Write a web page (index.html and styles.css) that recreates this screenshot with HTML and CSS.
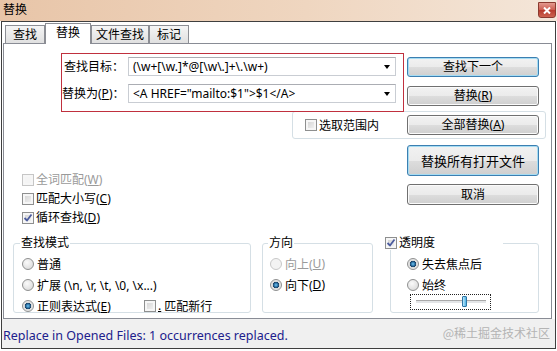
FILE: index.html
```html
<!DOCTYPE html>
<html lang="zh-CN">
<head>
  <meta charset="UTF-8" />
  <title>替换</title>
  <link rel="stylesheet" href="styles.css">
</head>
<body>
  <div class="window">
    <div class="titlebar">
      <span class="title">替换</span>
      <span class="close">
        <svg width="8" height="7" viewBox="0 0 8 7"><path d="M1 0.5 L7 6.5 M7 0.5 L1 6.5" stroke="#fff" stroke-width="2"/></svg>
      </span>
    </div>

    <div class="client">
      <!-- tabs -->
      <div class="tabs">
        <div class="tab">查找</div>
        <div class="tab active">替换</div>
        <div class="tab narrow">文件查找</div>
        <div class="tab">标记</div>
      </div>

      <div class="panel">
        <div class="search-row">
          <div class="fields">
            <label class="field-label">查找目标：</label>
            <div class="combo"><span>(\w+[\w.]*@[\w\.]+\.\w+)</span><i class="arrow"></i></div>
            <label class="field-label">替换为(<u>P</u>)：</label>
            <div class="combo"><span>&lt;A HREF="mailto:$1"&gt;$1&lt;/A&gt;</span><i class="arrow"></i></div>
          </div>
          <div class="btn-col">
            <button class="btn default">查找下一个</button>
            <button class="btn gap">替换(<u>R</u>)</button>
          </div>
        </div>

        <div class="range-box">
          <label class="check"><span class="cb"></span>选取范围内</label>
          <button class="btn">全部替换(<u>A</u>)</button>
        </div>

        <div class="options-row">
          <div class="checks">
            <div class="check disabled"><span class="cb"></span>全词匹配(<u>W</u>)</div>
            <div class="check"><span class="cb"></span>匹配大小写(<u>C</u>)</div>
            <div class="check"><span class="cb checked"><svg width="10" height="10" viewBox="0 0 10 10"><path d="M1.5 5 L4 7.5 L8.5 1.5" fill="none" stroke="#4b5b9e" stroke-width="1.8"/></svg></span>循环查找(<u>D</u>)</div>
          </div>
          <div class="btn-col bottom">
            <button class="btn default tall">替换所有打开文件</button>
            <button class="btn cancel">取消</button>
          </div>
        </div>

        <div class="groups">
          <div class="group mode">
            <span class="legend">查找模式</span>
            <div class="radio-row"><span class="rb"></span>普通</div>
            <div class="radio-row"><span class="rb"></span>扩展 (\n, \r, \t, \0, \x...)</div>
            <div class="radio-row">
              <span class="rb on"></span><span class="regex">正则表达式(<u>E</u>)</span>
              <span class="cb"></span><u>.</u>&nbsp;匹配新行
            </div>
          </div>

          <div class="group direction">
            <span class="legend">方向</span>
            <div class="radio-row disabled"><span class="rb"></span>向上(<u>U</u>)</div>
            <div class="radio-row"><span class="rb on"></span>向下(<u>D</u>)</div>
          </div>

          <div class="group opacity">
            <span class="legend"><span class="cb checked"><svg width="10" height="10" viewBox="0 0 10 10"><path d="M1.5 5 L4 7.5 L8.5 1.5" fill="none" stroke="#4b5b9e" stroke-width="1.8"/></svg></span>透明度</span>
            <div class="radio-row"><span class="rb on"></span>失去焦点后</div>
            <div class="radio-row"><span class="rb"></span>始终</div>
            <div class="slider">
              <span class="track"></span>
              <span class="thumb" style="left: 51px;"></span>
            </div>
          </div>
        </div>
      </div>

      <div class="statusbar">
        <span class="status-text">Replace in Opened Files: 1 occurrences replaced.</span>
        <span class="watermark">@稀土掘金技术社区</span>
      </div>
    </div>
  </div>
</body>
</html>
```

FILE: styles.css
```css
body {
  margin: 0;
  background: #fff;
}
.window {
  width: 557px;
  height: 351px;
  overflow: hidden;
  font-family: "Noto Sans", "Noto Sans CJK SC", sans-serif;
  font-size: 12px;
  color: #000;
}
u {
  text-decoration: underline;
}

/* title bar */
.titlebar {
  height: 21px;
  display: flex;
  justify-content: space-between;
  align-items: flex-start;
  background: linear-gradient(to right, #e8c5a8, #efd6c0 55%, #f4e6d9);
}
.title {
  padding: 2px 0 0 3px;
  line-height: 16px;
}
.close {
  box-sizing: border-box;
  width: 18px;
  height: 16px;
  margin: 2px 1px 0 0;
  display: flex;
  align-items: center;
  justify-content: center;
  border: 1px solid #8b3a30;
  border-radius: 0 0 3px 3px;
  background: linear-gradient(#e3998e, #cc5c4f 50%, #b73a2d 51%, #cd6350);
}

/* client frame */
.client {
  margin: 0 1px;
  height: 326px;
  border: 1px solid #3f3f3f;
  display: flex;
  flex-direction: column;
}

/* tabs */
.tabs {
  height: 21px;
  padding-left: 3px;
  display: flex;
  align-items: flex-end;
  position: relative;
  z-index: 1;
}
.tab {
  height: 17px;
  line-height: 17px;
  padding: 0 7px;
  border: 1px solid #8c8e94;
  border-bottom: none;
  background: linear-gradient(#f5f5f5, #e0e0e0);
}
.tab.narrow {
  padding: 0 4px;
}
.tab.active {
  height: 20px;
  line-height: 18px;
  padding: 0 10px;
  margin-bottom: -1px;
  background: #fff;
}

/* tab page */
.panel {
  margin-left: 1px;
  width: 547px;
  height: 274px;
  border: 1px solid #898c95;
  background: #fff;
}
.search-row {
  display: flex;
  margin: 9px 0 0 57px;
}
.fields {
  box-sizing: border-box;
  width: 343px;
  height: 59px;
  padding: 3px 7px 8px 0;
  border: 1px solid #c0303e;
  display: grid;
  grid-template-columns: 62px 268px;
  column-gap: 4px;
  row-gap: 8px;
}
.field-label {
  text-align: right;
  line-height: 19px;
  white-space: nowrap;
}
.combo {
  box-sizing: border-box;
  height: 19px;
  padding: 0 5px 0 4px;
  display: flex;
  align-items: center;
  justify-content: space-between;
  border: 1px solid #c9cdd3;
  border-top-color: #abadb3;
  white-space: nowrap;
}
.arrow {
  width: 0;
  height: 0;
  border-left: 3px solid transparent;
  border-right: 3px solid transparent;
  border-top: 4px solid #000;
}

/* buttons */
.btn-col {
  margin: 4px 0 0 3px;
  display: flex;
  flex-direction: column;
}
.btn {
  box-sizing: border-box;
  width: 132px;
  height: 20px;
  padding: 0;
  font: inherit;
  color: #000;
  line-height: 16px;
  border: 1px solid #707070;
  border-radius: 3px;
  background: linear-gradient(#f2f2f2, #ebebeb 50%, #dddddd 51%, #cfcfcf);
  box-shadow: inset 0 0 0 1px #fbfbfb;
}
.btn.default {
  border-color: #3c7fb1;
  box-shadow: inset 0 0 0 1px #a5dcf3;
}
.btn.gap {
  margin-top: 9px;
}
.btn.tall {
  height: 31px;
  font-size: 13px;
}
.btn.cancel {
  height: 21px;
  margin-top: 8px;
}

.range-box {
  box-sizing: border-box;
  width: 254px;
  height: 28px;
  margin: -1px 0 0 288px;
  padding: 0 6px 0 12px;
  display: flex;
  align-items: center;
  justify-content: space-between;
  border: 1px solid #d5dfe5;
  border-radius: 3px;
}

/* checkboxes & radios */
.check {
  display: flex;
  align-items: center;
  line-height: 19px;
}
.check.disabled {
  color: #9a9a9a;
}
.cb {
  box-sizing: border-box;
  width: 12px;
  height: 12px;
  margin-right: 2px;
  display: inline-flex;
  align-items: center;
  justify-content: center;
  border: 1px solid #8e8f8f;
  background: linear-gradient(135deg, #cfcfcf, #f7f7f7);
  box-shadow: inset 0 0 0 2px #f6f6f6;
  vertical-align: middle;
}
.disabled .cb {
  border-color: #c6c6c6;
  background: #f4f4f4;
}
.rb {
  box-sizing: border-box;
  width: 12px;
  height: 12px;
  margin-right: 3px;
  display: inline-block;
  border: 1px solid #8f9090;
  border-radius: 50%;
  background: radial-gradient(circle at 40% 35%, #fafafa, #d4d4d4);
  vertical-align: middle;
}
.rb.on {
  background: radial-gradient(circle, #6fc7f5 0, #2a6da0 2px, #173e61 3px, #d9d9d9 3.5px, #f3f3f3 6px);
}
.disabled {
  color: #9a9a9a;
}
.disabled .rb {
  border-color: #c8c8c8;
  background: #f3f3f3;
}

.options-row {
  display: flex;
  height: 88px;
}
.checks {
  margin-left: 18px;
  padding-top: 31px;
}
.btn-col.bottom {
  margin: 6px 12px 0 auto;
}

/* group boxes */
.groups {
  display: flex;
  margin: 16px 0 0 9px;
}
.group {
  box-sizing: border-box;
  height: 70px;
  padding-top: 9px;
  border: 1px solid #d5dfe5;
  border-radius: 3px;
  position: relative;
}
.legend {
  position: absolute;
  top: -8px;
  left: 6px;
  padding: 0 1px;
  line-height: 14px;
  background: #fff;
  display: flex;
  align-items: center;
}
.radio-row {
  display: flex;
  align-items: center;
  height: 21px;
  white-space: nowrap;
}
.mode {
  width: 238px;
  padding-left: 8px;
}
.regex {
  width: 107px;
}
.direction {
  width: 111px;
  margin-left: 11px;
  padding-left: 7px;
}
.direction .legend {
  left: 5px;
}
.opacity {
  width: 149px;
  margin-left: 17px;
  padding-left: 16px;
}
.opacity .legend {
  left: -6px;
  width: 118px;
  padding: 0;
}
.opacity .legend .cb {
  margin-right: 2px;
}
.slider {
  box-sizing: border-box;
  width: 81px;
  height: 16px;
  margin: -1px 0 0 3px;
  border: 1px dotted #222;
  display: flex;
  align-items: center;
  justify-content: center;
  position: relative;
}
.track {
  width: 70px;
  height: 2px;
  border-top: 1px solid #a8a8a8;
  border-bottom: 1px solid #fff;
  background: #e3e5e7;
}
.thumb {
  position: absolute;
  top: 1px;
  width: 5px;
  height: 11px;
  box-sizing: border-box;
  border: 1px solid #2f76a6;
  border-radius: 1px;
  background: linear-gradient(to right, #bde6fa, #4eb2e4);
}

/* status bar */
.statusbar {
  height: 29px;
  padding: 0 5px 0 1px;
  display: flex;
  justify-content: space-between;
  align-items: center;
  background: #f0f0f0;
}
.status-text {
  padding-top: 4px;
  font-size: 12.5px;
  color: #20208c;
}
.watermark {
  color: #b4b4b4;
  font-family: "Noto Sans CJK SC", sans-serif;
  font-size: 12px;
  margin-bottom: 2px;
}
```
